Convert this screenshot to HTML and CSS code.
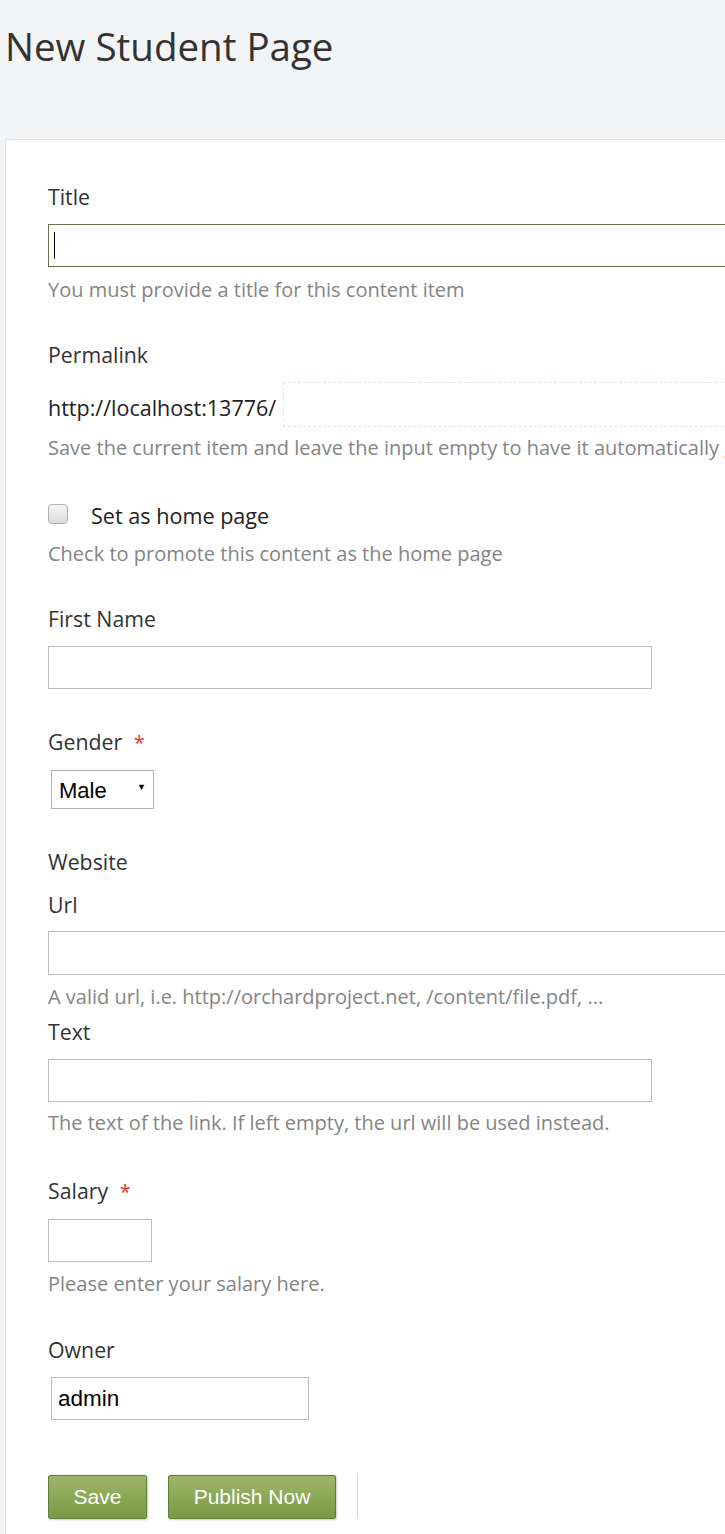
FILE: index.html
```html
<!DOCTYPE html>
<html lang="en">
<head>
<meta charset="utf-8">
<title>New Student Page</title>
<link rel="stylesheet" href="styles.css">
</head>
<body>
<h1 class="page-title">New Student Page</h1>
<div class="panel">
  <div class="field">
    <label class="label">Title</label>
    <div class="focus-wrap">
      <input class="input input-wide input-focus" type="text">
      <span class="caret"></span>
    </div>
    <div class="hint">You must provide a title for this content item</div>
  </div>

  <div class="field field-permalink">
    <label class="label">Permalink</label>
    <div class="permalink-row">
      <span class="prefix">http://localhost:13776/</span>
      <input class="input-dashed" type="text">
    </div>
    <div class="hint hint-tight">Save the current item and leave the input empty to have it automatically generated.</div>
  </div>

  <div class="field">
    <div class="check-row">
      <input class="checkbox" type="checkbox">
      <span class="check-label">Set as home page</span>
    </div>
    <div class="hint hint-check">Check to promote this content as the home page</div>
  </div>

  <div class="field field-name">
    <label class="label">First Name</label>
    <input class="input input-medium" type="text">
  </div>

  <div class="field field-gender">
    <label class="label">Gender <span class="req">*</span></label>
    <div class="select">
      <span>Male</span>
      <span class="arrow">&#9660;</span>
    </div>
  </div>

  <div class="field field-website">
    <div class="label label-group">Website</div>
    <label class="label label-url">Url</label>
    <input class="input input-wide input-url" type="text">
    <div class="hint hint-url">A valid url, i.e. http://orchardproject.net, /content/file.pdf, ...</div>
    <label class="label label-text">Text</label>
    <input class="input input-medium" type="text">
    <div class="hint hint-tight">The text of the link. If left empty, the url will be used instead.</div>
  </div>

  <div class="field field-salary">
    <label class="label">Salary <span class="req">*</span></label>
    <input class="input input-small" type="text">
    <div class="hint hint-salary">Please enter your salary here.</div>
  </div>

  <div class="field field-last">
    <label class="label">Owner</label>
    <input class="input input-owner" type="text" value="admin">
  </div>

  <div class="actions">
    <button class="btn btn-save" type="button">Save</button>
    <button class="btn btn-publish" type="button">Publish Now</button>
    <span class="divider"></span>
  </div>
</div>
</body>
</html>
```

FILE: styles.css
```css
html, body {
  margin: 0;
  padding: 0;
  overflow: hidden;
}
body {
  background: #f3f4f6;
  font-family: "Open Sans", "Noto Sans", sans-serif;
  color: #333;
  width: 725px;
  height: 1534px;
}
.page-title {
  margin: 0;
  padding: 20px 0 0 5px;
  font-weight: 400;
  font-size: 38.5px;
  line-height: 52px;
  color: #333;
  height: 119px;
  box-sizing: border-box;
  white-space: nowrap;
}
.panel {
  margin-left: 5px;
  margin-top: 20px;
  width: 1000px;
  min-height: 1500px;
  background: #fff;
  border-top: 1px solid #e3e3e3;
  border-left: 1px solid #e3e3e3;
  border-radius: 2px 0 0 0;
  padding: 44px 0 0 42px;
  box-sizing: border-box;
}
.field {
  display: flex;
  flex-direction: column;
  align-items: flex-start;
  margin-bottom: 39px;
}
.field-permalink { margin-bottom: 41px; }
.field-name { margin-bottom: 40px; }
.field-gender { margin-bottom: 40px; }
.field-website { margin-bottom: 42px; }
.field-salary { margin-bottom: 40px; }
.label {
  font-size: 21.3px;
  line-height: 26px;
  color: #333;
  margin-bottom: 14px;
  white-space: nowrap;
}
.req {
  color: #e8322f;
  margin-left: 6px;
  font-size: 20px;
}
.hint {
  font-size: 20px;
  line-height: 26px;
  color: #858585;
  margin-top: 10px;
  white-space: nowrap;
}
.hint-tight { margin-top: 8px; }
.hint-url { margin-top: 9px; }
.hint-check { margin-top: 13px; }
.hint-salary { margin-top: 9px; }
.input {
  display: block;
  box-sizing: border-box;
  height: 43px;
  border: 1px solid #bdbdbd;
  background: #fff;
  margin: 0;
  padding: 0 6px;
  outline: none;
  font-family: "Liberation Sans", Arial, sans-serif;
  font-size: 22.5px;
  color: #000;
}
.input-wide { width: 760px; }
.input-medium { width: 604px; }
.input-small { width: 104px; }
.input-owner { width: 258px; margin-left: 3px; padding-left: 6px; }
.input-url { height: 44px; }
.focus-wrap {
  position: relative;
}
.input-focus {
  border-color: #6e6e4f;
}
.caret {
  position: absolute;
  left: 6px;
  top: 8px;
  width: 1px;
  height: 27px;
  background: #000;
}
.permalink-row {
  display: flex;
  align-items: center;
  height: 45px;
}
.prefix {
  font-size: 21.5px;
  color: #222;
  padding-top: 6px;
  margin-right: 7px;
  white-space: nowrap;
}
.input-dashed {
  box-sizing: border-box;
  width: 600px;
  height: 45px;
  border: 1px dashed #e6e6d6;
  background: #fff;
  outline: none;
  margin: 0;
}
.check-row {
  display: flex;
  align-items: center;
  height: 26px;
}
.checkbox {
  appearance: none;
  -webkit-appearance: none;
  box-sizing: border-box;
  width: 20px;
  height: 20px;
  margin: -3px 23px 0 0;
  border: 1px solid #b0b0b0;
  border-radius: 4px;
  background: linear-gradient(#f4f4f4, #dcdcdc);
}
.check-label {
  font-size: 21.6px;
  color: #222;
  white-space: nowrap;
}
.select {
  box-sizing: border-box;
  width: 103px;
  height: 39px;
  margin-left: 3px;
  border: 1px solid #b4b4b4;
  background: #fff;
  display: flex;
  align-items: center;
  justify-content: space-between;
  padding: 2px 7px 0 7px;
  font-family: "Liberation Sans", Arial, sans-serif;
  font-size: 22px;
  color: #000;
}
.arrow {
  font-size: 9px;
  margin-top: -8px;
}
.label-group { margin-bottom: 17px; }
.label-url { margin-bottom: 13px; }
.label-text { margin-top: 9px; }
.field-last { margin-bottom: 55px; }
.actions {
  display: flex;
  align-items: flex-start;
}
.btn {
  box-sizing: border-box;
  height: 44px;
  border: 1px solid #5f7e35;
  border-radius: 2px;
  background: linear-gradient(#9cb66b, #7b9a45);
  color: #fff;
  font-family: "Liberation Sans", Arial, sans-serif;
  font-size: 21px;
  padding: 0;
  box-shadow: 1px 1px 2px rgba(0,0,0,0.2);
}
.btn-save { width: 99px; margin-right: 21px; }
.btn-publish { width: 168px; margin-right: 21px; }
.divider {
  width: 1px;
  height: 43px;
  background: #d8d8d8;
}
```
